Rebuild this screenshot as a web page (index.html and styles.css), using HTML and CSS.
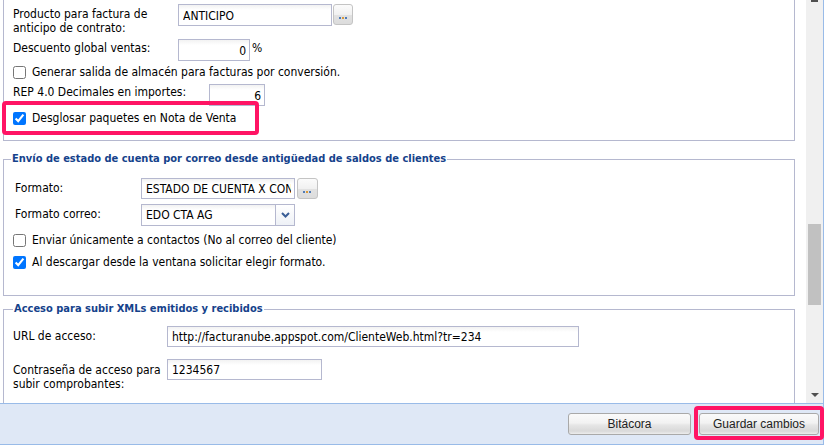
FILE: index.html
```html
<!DOCTYPE html>
<html lang="es">
<head>
  <meta charset="UTF-8">
  <title>Configuración</title>
  <link rel="stylesheet" href="styles.css">
</head>
<body>
  <div class="window">
    <div class="panel-body">
      <div class="content">

        <fieldset class="group cut">
          <div class="row r-producto">
            <label class="lbl" style="width:165px">Producto para factura de<br>anticipo de contrato:</label>
            <input class="field" type="text" value="ANTICIPO" style="width:154px">
            <button class="pick">
              <svg width="9" height="2" viewBox="0 0 9 2"><rect x="0" y="0" width="2" height="2" fill="#4f7cb8"/><rect x="3" y="0" width="2" height="2" fill="#d8993a"/><rect x="6" y="0" width="2" height="2" fill="#4f7cb8"/></svg>
            </button>
          </div>
          <div class="row r-descuento">
            <label class="lbl one" style="width:165px">Descuento global ventas:</label>
            <input class="field num" type="text" value="0" style="width:72px">
            <span class="unit">%</span>
          </div>
          <div class="check r-salida">
            <input type="checkbox">
            <span>Generar salida de almacén para facturas por conversión.</span>
          </div>
          <div class="row r-rep">
            <label class="lbl rep" style="width:196px">REP 4.0 Decimales en importes:</label>
            <input class="field num" type="text" value="6" style="width:56px">
          </div>
          <div class="check r-desglosar">
            <input type="checkbox" checked>
            <span>Desglosar paquetes en Nota de Venta</span>
            <div class="mark mark-check"></div>
          </div>
        </fieldset>

        <fieldset class="group g-envio">
          <legend>Envío de estado de cuenta por correo desde antigüedad de saldos de clientes</legend>
          <div class="row r-formato indent">
            <label class="lbl one" style="width:126px">Formato:</label>
            <input class="field" type="text" value="ESTADO DE CUENTA X CONTACTO" style="width:154px;height:21px">
            <button class="pick pick-2">
              <svg width="9" height="2" viewBox="0 0 9 2"><rect x="0" y="0" width="2" height="2" fill="#4f7cb8"/><rect x="3" y="0" width="2" height="2" fill="#d8993a"/><rect x="6" y="0" width="2" height="2" fill="#4f7cb8"/></svg>
            </button>
          </div>
          <div class="row r-correo indent">
            <label class="lbl one" style="width:126px">Formato correo:</label>
            <div class="combo" style="width:154px">
              <span class="combo-text">EDO CTA AG</span>
              <span class="trigger">
                <svg width="9" height="6" viewBox="0 0 9 6"><path d="M1 1 L4.5 4.5 L8 1" fill="none" stroke="#3a5e96" stroke-width="2"/></svg>
              </span>
            </div>
          </div>
          <div class="check tall r-contactos">
            <input type="checkbox">
            <span>Enviar únicamente a contactos (No al correo del cliente)</span>
          </div>
          <div class="check tall">
            <input type="checkbox" checked>
            <span>Al descargar desde la ventana solicitar elegir formato.</span>
          </div>
        </fieldset>

        <fieldset class="group g-acceso">
          <legend>Acceso para subir XMLs emitidos y recibidos</legend>
          <div class="row">
            <label class="lbl one" style="width:154px">URL de acceso:</label>
            <input class="field" type="text" value="http://facturanube.appspot.com/ClienteWeb.html?tr=234" style="width:412px;height:21px">
          </div>
          <div class="row r-pass">
            <label class="lbl pass" style="width:154px">Contraseña de acceso para<br>subir comprobantes:</label>
            <input class="field" type="text" value="1234567" style="width:155px;height:21px">
          </div>
        </fieldset>

      </div>

      <div class="vscroll">
        <div class="arrow-up-tail"></div>
        <div class="thumb"></div>
        <div class="arrow-down"></div>
      </div>
    </div>

    <div class="footer">
      <button class="btn" style="width:123px">Bitácora</button>
      <div class="btn-wrap">
        <button class="btn" style="width:120px">Guardar cambios</button>
        <div class="mark mark-save"></div>
      </div>
    </div>
  </div>
</body>
</html>
```

FILE: styles.css
```css
body {
  margin: 0;
  background: #fff;
  font-family: "DejaVu Sans Condensed", "DejaVu Sans", sans-serif;
  font-stretch: condensed;
  font-size: 12px;
  color: #000;
}

.window {
  width: 823px;
  border-right: 1px solid #99bbe8;
}

.panel-body {
  display: flex;
  height: 403px;
  overflow: hidden;
}

.content {
  flex: 1;
  padding: 0 11px 0 3px;
}

/* fieldsets */
.group {
  margin: 0;
  min-width: 0;
  border: 1px solid #b5b8cf;
  padding: 0 9px;
}

.group legend {
  padding: 0 1px;
  font-size: 11px;
  font-weight: bold;
  color: #15428b;
  line-height: 14px;
}

.group.cut {
  border-top: none;
  padding-bottom: 13px;
}

.g-envio {
  margin-top: 11px;
  padding-top: 12px;
  padding-bottom: 22px;
}

.g-envio legend {
  margin-left: -2px;
}

.g-acceso {
  margin-top: 6px;
  padding-top: 10px;
  padding-bottom: 40px;
}

/* rows */
.row {
  display: flex;
  align-items: flex-start;
  position: relative;
}

.row.indent {
  padding-left: 2px;
}

.lbl {
  flex: none;
  line-height: 14px;
  padding-top: 3px;
}

.lbl.rep {
  padding-top: 1px;
}

.lbl.pass {
  padding-top: 4px;
}

.r-producto {
  margin-top: 4px;
}

.r-descuento {
  margin-top: 4px;
}

.r-descuento .lbl {
  padding-top: 2px;
}

.r-rep {
  margin-top: 3px;
}

.r-correo {
  margin-top: 5px;
}

.r-pass {
  margin-top: 12px;
}

.field {
  box-sizing: border-box;
  height: 22px;
  margin: 0;
  padding: 1px 3px 0 4px;
  border: 1px solid #b5b8cf;
  background: linear-gradient(#f2f2f2, #fff 5px);
  font: inherit;
  font-size: 12px;
  color: #000;
  outline: none;
}

.field.num {
  text-align: right;
}

.unit {
  margin-left: 2px;
  line-height: 18px;
}

/* "..." lookup button */
.pick {
  box-sizing: border-box;
  width: 20px;
  height: 21px;
  margin: 0 0 0 1px;
  padding: 7px 0 0;
  border: 1px solid #c4c4c4;
  border-radius: 3px;
  background: linear-gradient(#fbfbfb, #f1f1f1 50%, #e2e2e2 51%, #dcdcdc);
  display: flex;
  justify-content: center;
  align-items: center;
}

.pick-2 {
  margin-left: 2px;
  width: 21px;
}

/* combo */
.combo {
  box-sizing: border-box;
  height: 22px;
  display: flex;
  border: 1px solid #b5b8cf;
  background: linear-gradient(#f2f2f2, #fff 5px);
}

.combo-text {
  flex: 1;
  padding: 3px 0 0 4px;
  line-height: 15px;
}

.trigger {
  width: 18px;
  border-left: 1px solid #b5b8cf;
  background: linear-gradient(#fff, #eef1f6);
  display: flex;
  justify-content: center;
  align-items: center;
}

/* checkboxes */
.check {
  display: flex;
  align-items: center;
  height: 18px;
  position: relative;
}

.check.tall {
  height: 22px;
}

.check input {
  width: 13px;
  height: 13px;
  margin: 0 6px 0 0;
}

.r-salida {
  margin-top: 2px;
}

.r-desglosar {
  margin-top: 3px;
}

.r-contactos {
  margin-top: 3px;
}

/* highlight boxes */
.mark {
  position: absolute;
  box-sizing: border-box;
  border: 4px solid #ff1464;
  border-radius: 4px;
}

.mark-check {
  top: -8px;
  left: -11px;
  width: 257px;
  height: 34px;
}

.mark-save {
  top: -7px;
  left: -5px;
  width: 130px;
  height: 34px;
}

/* scrollbar */
.vscroll {
  width: 17px;
  background: #f0f0f0;
}

.arrow-up-tail {
  width: 7px;
  height: 2px;
  margin: 0 auto;
  background: #505050;
}

.thumb {
  width: 13px;
  height: 81px;
  margin: 222px auto 0;
  background: #c1c1c1;
}

.arrow-down {
  width: 0;
  height: 0;
  margin: 88px auto 0;
  border-left: 4px solid transparent;
  border-right: 4px solid transparent;
  border-top: 4px solid #505050;
}

/* footer */
.footer {
  display: flex;
  justify-content: flex-end;
  align-items: flex-start;
  gap: 8px;
  box-sizing: border-box;
  height: 42px;
  padding: 9px 4px 0 0;
  border-top: 1px solid #99bbe8;
  border-bottom: 1px solid #99bbe8;
  background: #dfe8f6;
}

.btn-wrap {
  position: relative;
}

.btn {
  box-sizing: border-box;
  height: 22px;
  margin: 0;
  padding: 0;
  border: 1px solid #a9a9a9;
  border-radius: 3px;
  background: linear-gradient(#fafafa, #f2f2f2 45%, #e6e6e6 55%, #d9d9d9 85%, #ececec);
  font-family: "Liberation Sans", Arial, sans-serif;
  font-size: 12px;
  color: #222;
}
```
